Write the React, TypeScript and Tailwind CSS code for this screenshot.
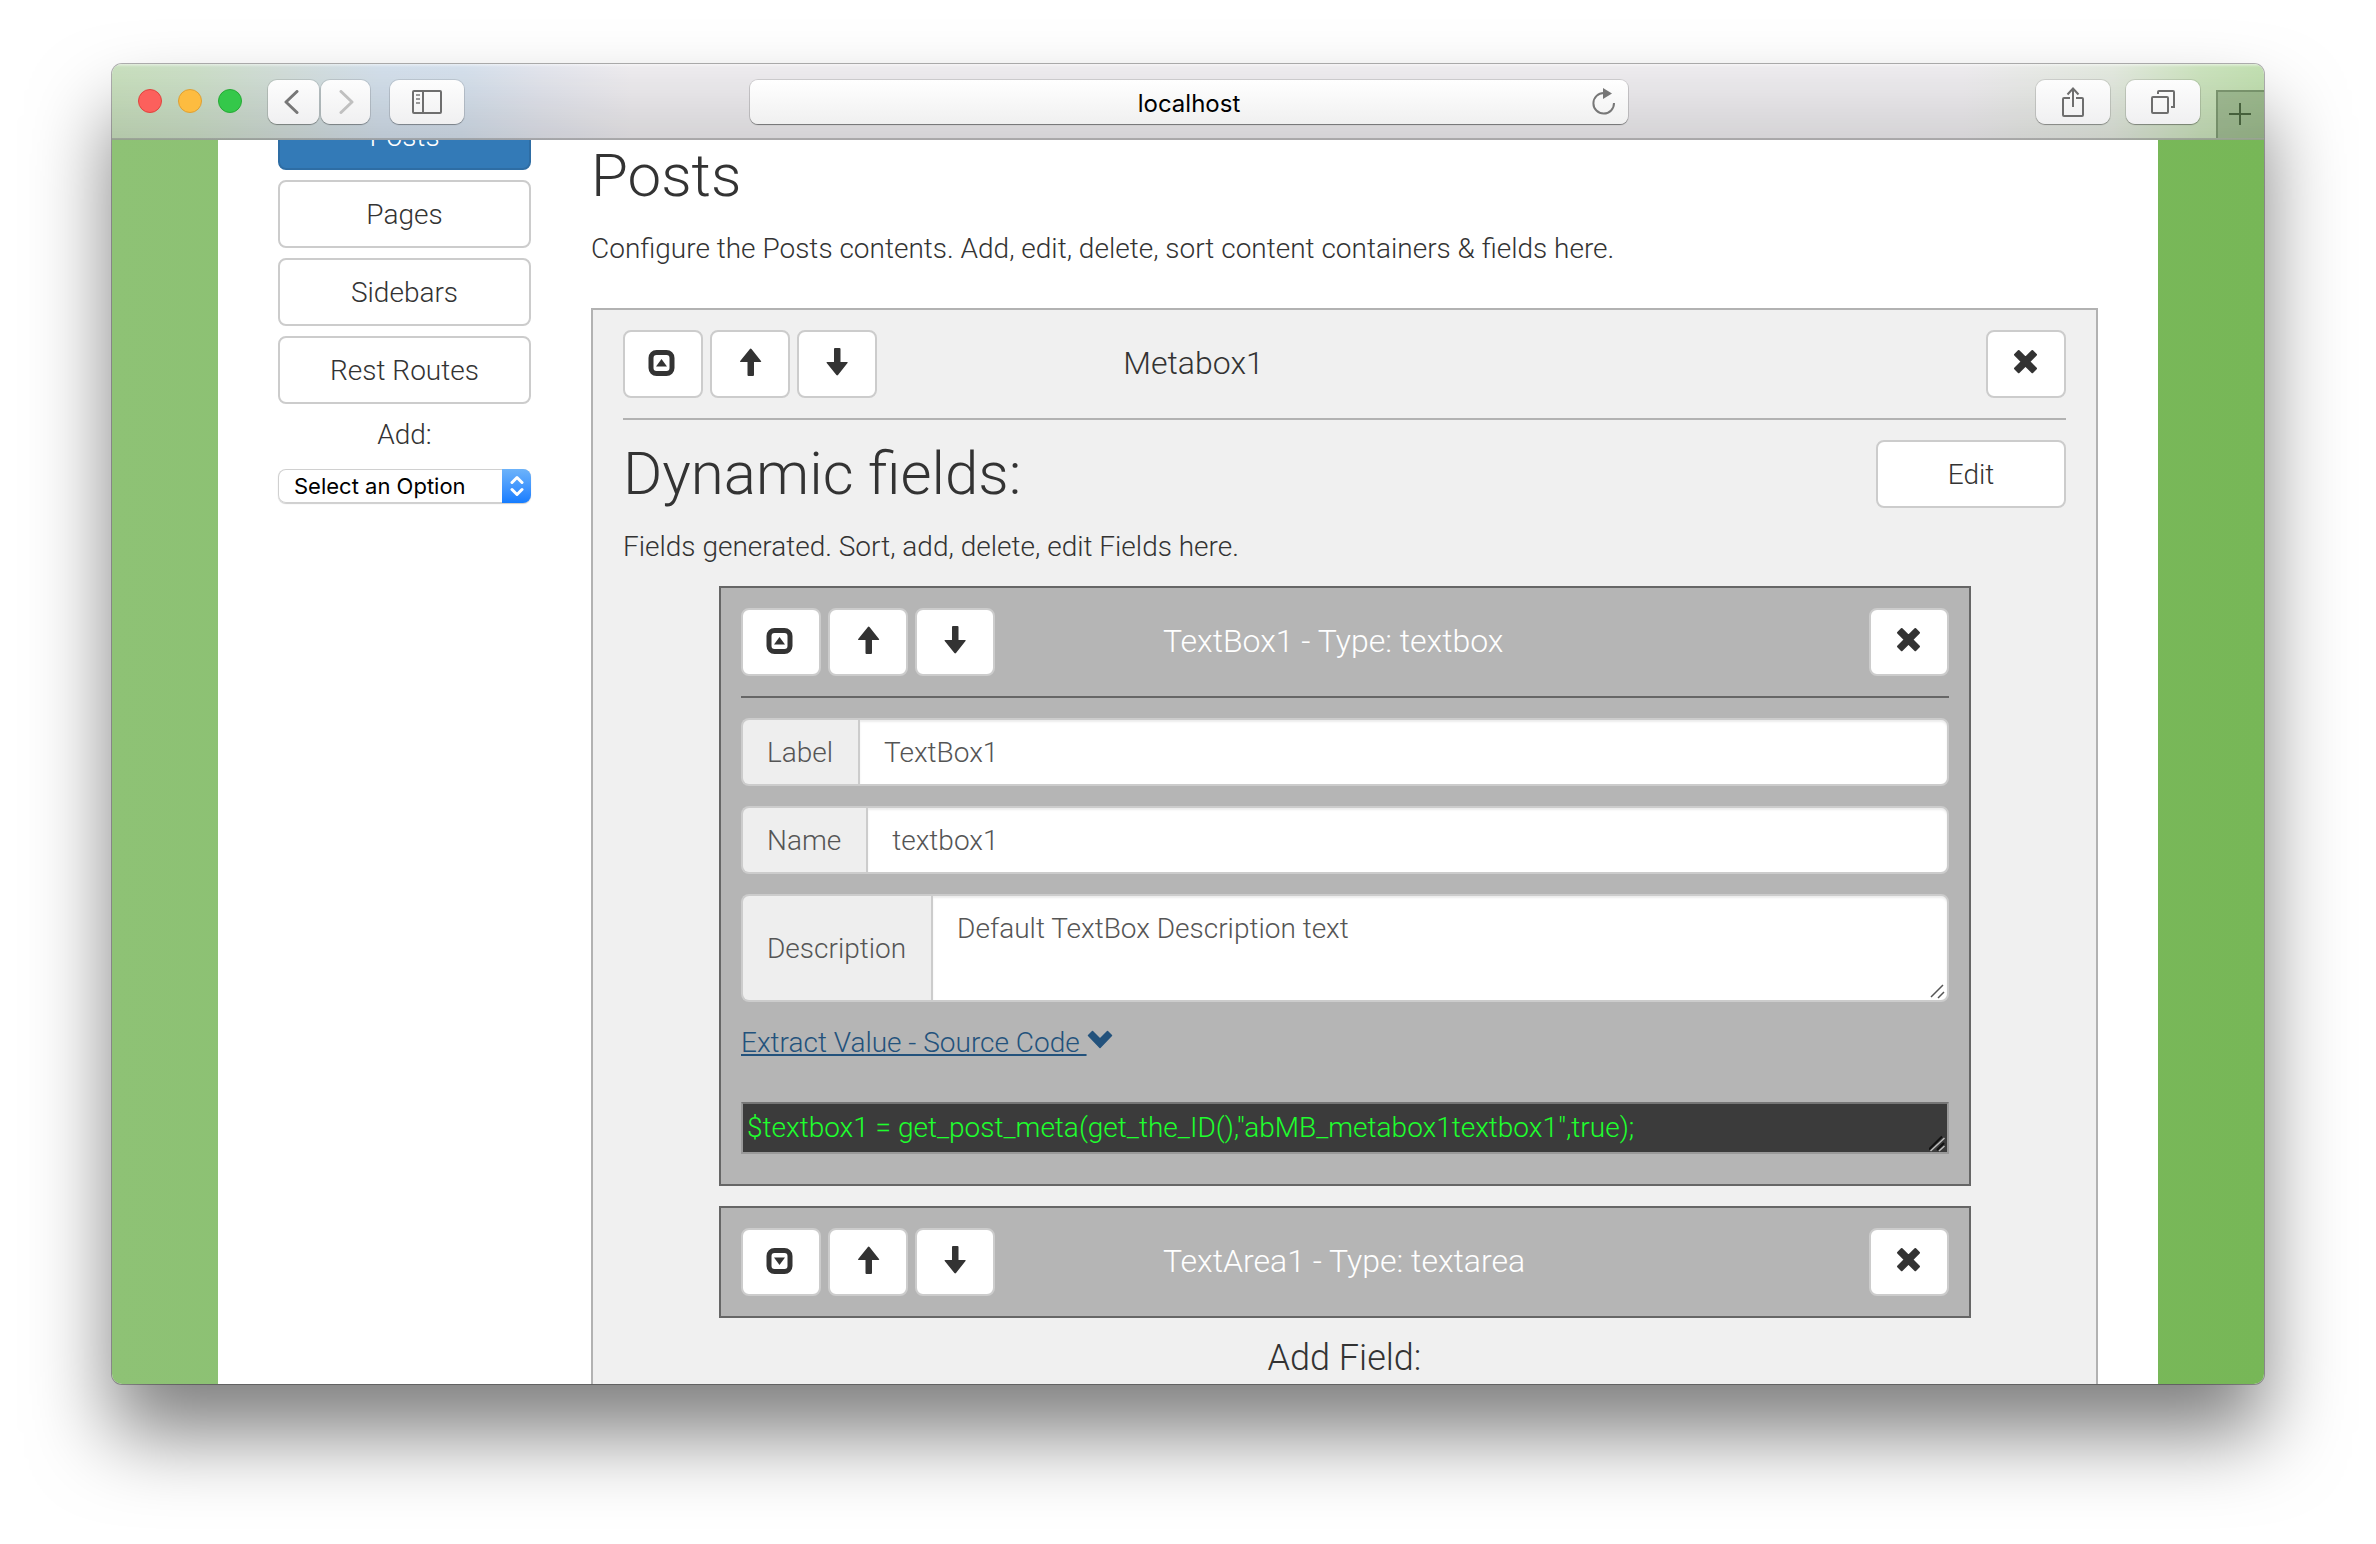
import React, { useState } from "react";

const iconButton =
  "flex h-[68px] items-center rounded-lg border-2 border-[#ccc] bg-white px-6 text-[#333]";
const toolButton =
  "flex h-11 items-center justify-center rounded-[9px] bg-linear-to-b from-[#fdfdfd] to-[#f0f0f1] shadow-[0_1px_1px_rgba(0,0,0,0.3),0_0_0_1px_rgba(0,0,0,0.1)]";

function ToggleIcon({ open }: { open: boolean }) {
  return (
    <svg width="28" height="28" viewBox="0 0 28 28" className="overflow-visible" aria-hidden="true">
      <rect x="2" y="2.5" width="21" height="21" rx="5.5" fill="none" stroke="currentColor" strokeWidth="5" />
      <path d={open ? "M12.5 9 18 16.5H7Z" : "M12.5 17 18 9.5H7Z"} fill="currentColor" />
    </svg>
  );
}

function ArrowIcon({ down }: { down?: boolean }) {
  return (
    <svg width="28" height="28" viewBox="0 0 28 28" className="overflow-visible" aria-hidden="true">
      <path
        d={
          down
            ? "M12 -2h4.500q1 0 1 1v13h6.500q1.300 0 .5 1L15 25q-.8 .9-1.600 0L3.700 13q-.7-1 .5-1H11V-1q0-1 1-1Z"
            : "M12.500 26h4.500q1 0 1-1V12h6.500q1.300 0 .5-1L15.500 -1q-.8-.9-1.600 0L4.200 11q-.7 1 .5 1H11.500v13q0 1 1 1Z"
        }
        fill="currentColor"
      />
    </svg>
  );
}

function CloseIcon() {
  return (
    <svg width="28" height="28" viewBox="0 0 28 28" className="overflow-visible" aria-hidden="true">
      <path
        d="M3 4.700 6.700 1 13.500 7.700 20.300 1 24 4.700 17.300 11.600 24 18.500 20.300 22.200 13.500 15.500 6.700 22.200 3 18.500 9.700 11.600Z"
        fill="currentColor"
        stroke="currentColor"
        strokeWidth="2"
        strokeLinejoin="round"
      />
    </svg>
  );
}

function ResizeGrip({ dark }: { dark?: boolean }) {
  return (
    <svg
      width="18"
      height="18"
      viewBox="0 0 18 18"
      className="pointer-events-none absolute right-[2px] bottom-[2px]"
      aria-hidden="true"
    >
      {dark && <path d="M0 15.500 13 2.500M8 16 15 9" stroke="#111" strokeWidth="2" />}
      <path
        d={dark ? "M1.500 17 15.500 4M10 17 15.500 12" : "M2 15 14 3M9 16 15 10"}
        stroke={dark ? "#bbb" : "#555"}
        strokeWidth="1.500"
      />
    </svg>
  );
}

function BoxHeader({ title, open, titleClass }: { title: string; open: boolean; titleClass: string }) {
  return (
    <div className="grid grid-cols-3 gap-x-[58px]">
      <div className="flex gap-[7px]">
        <button type="button" aria-label="Toggle" className={iconButton}>
          <ToggleIcon open={open} />
        </button>
        <button type="button" aria-label="Move up" className={iconButton}>
          <ArrowIcon />
        </button>
        <button type="button" aria-label="Move down" className={iconButton}>
          <ArrowIcon down />
        </button>
      </div>
      <h3 className={titleClass}>{title}</h3>
      <div className="flex justify-end">
        <button type="button" aria-label="Remove" className={iconButton}>
          <CloseIcon />
        </button>
      </div>
    </div>
  );
}

const addon =
  "flex items-center rounded-l-lg border-2 border-r-0 border-[#ccc] bg-[#eee] pt-[2px] pr-[25px] pl-6 text-[#555]";
const control =
  "block w-full rounded-r-lg border-2 border-[#ccc] bg-white px-6 text-[#555] shadow-[inset_0_2px_2px_rgba(0,0,0,0.075)] outline-none";

function TextField({ id, label, initial }: { id: string; label: string; initial: string }) {
  const [value, setValue] = useState(initial);
  return (
    <div className="flex">
      <label htmlFor={id} className={addon}>
        {label}
      </label>
      <input
        id={id}
        type="text"
        value={value}
        onChange={(e) => setValue(e.target.value)}
        className={control + " h-[68px] min-w-0 flex-1 py-3 leading-10"}
      />
    </div>
  );
}

function Toolbar() {
  return (
    <header className="grid h-[76px] shrink-0 grid-cols-[638fr_878fr_636fr] border-b-2 border-black/30 bg-[linear-gradient(to_bottom,rgba(255,255,255,0.5)_0,rgba(255,255,255,0)_3px,rgba(0,0,0,0.1)_100%),linear-gradient(to_right,#c8dfbd_0,#cbdec6_80px,#d1dcd8_170px,#d2deea_270px,#d4dfeb_350px,#e2e4ec_430px,#edebee_520px,#edebee_86%,#e2e8de_93%,#cbe2bd_97%,#c1dfb0_100%)]">
      <div className="flex items-start pt-4 pl-[26px]">
        <div className="flex gap-4 pt-[9px]">
          <button type="button" aria-label="Close window" className="size-6 rounded-full border border-[#e0443e] bg-[#fc605c]" />
          <button type="button" aria-label="Minimize window" className="size-6 rounded-full border border-[#dea034] bg-[#fdbc40]" />
          <button type="button" aria-label="Zoom window" className="size-6 rounded-full border border-[#27aa35] bg-[#34c84a]" />
        </div>
        <div className="ml-[26px] flex gap-[2px]">
          <button type="button" aria-label="Back" className={toolButton + " w-[51px] pr-1"}>
            <svg width="16" height="24" viewBox="0 0 16 24" fill="none" stroke="#777" strokeWidth="3" strokeLinecap="round" strokeLinejoin="round">
              <path d="M13 1.500 2 12l11 10.500" />
            </svg>
          </button>
          <button type="button" aria-label="Forward" className={toolButton + " w-[49px]"}>
            <svg width="16" height="24" viewBox="0 0 16 24" fill="none" stroke="#c0c0c0" strokeWidth="3" strokeLinecap="round" strokeLinejoin="round">
              <path d="M3 1.500 14 12 3 22.500" />
            </svg>
          </button>
        </div>
        <button type="button" aria-label="Show sidebar" className={toolButton + " ml-5 w-[74px]"}>
          <svg width="30" height="24" viewBox="0 0 30 24" fill="none" stroke="#6e6e6e" strokeWidth="2">
            <rect x="1" y="1" width="28" height="22" rx="1" />
            <path d="M11 1v22" />
            <path d="M4 5h4M4 9h4M4 13h4" stroke="#999" />
          </svg>
        </button>
      </div>
      <div className="pt-4">
        <div className="relative h-11 rounded-lg bg-linear-to-b from-white to-[#f0f0f0] shadow-[0_1px_1px_rgba(0,0,0,0.4),0_0_0_1px_rgba(0,0,0,0.12)]">
          <input
            type="text"
            aria-label="Address"
            defaultValue="localhost"
            className="h-full w-full bg-transparent px-16 pt-[2px] text-center font-['Inter',sans-serif] text-2xl text-black outline-none"
          />
          <button type="button" aria-label="Reload" className="absolute top-2 right-3">
            <svg width="24" height="28" viewBox="0 0 24 28">
              <path d="M12 5A10.300 10.300 0 1 0 22 15" fill="none" stroke="#777" strokeWidth="2" />
              <path d="M11 0 20 5.500 11 11Z" fill="#777" />
            </svg>
          </button>
        </div>
      </div>
      <div className="flex items-start justify-end gap-4 pt-4">
        <button type="button" aria-label="Share" className={toolButton + " w-[74px]"}>
          <svg width="24" height="32" viewBox="0 0 24 32" fill="none" stroke="#6e6e6e" strokeWidth="2">
            <path d="M9 12H3q-1 0-1 1v16q0 1 1 1h18q1 0 1-1V13q0-1-1-1h-6" />
            <path d="M12 21V3M6.500 8.500 12 2.500l5.500 6" />
          </svg>
        </button>
        <button type="button" aria-label="Show all tabs" className={toolButton + " w-[74px]"}>
          <svg width="26" height="26" viewBox="0 0 26 26" fill="none" stroke="#6e6e6e" strokeWidth="2">
            <rect x="2" y="8" width="16" height="16" rx="1" />
            <path d="M8 5V3q0-1 1-1h14q1 0 1 1v15h-3" />
          </svg>
        </button>
        <button
          type="button"
          aria-label="New tab"
          className="mt-[10px] flex h-12 w-12 items-center justify-center border-t-2 border-l-2 border-[#465f3c]/40 bg-[#47653a]/30 pr-[2px] pb-[2px]"
        >
          <svg width="22" height="22" viewBox="0 0 22 22" stroke="#46603c" strokeWidth="2">
            <path d="M11 0v22M0 11h22" />
          </svg>
        </button>
      </div>
    </header>
  );
}

function Sidebar() {
  const item = "block h-[68px] w-full rounded-lg border-2 pt-[2px] text-center leading-10";
  return (
    <nav className="-mt-[38px] flex w-[253px] shrink-0 flex-col gap-[10px]">
      <button type="button" className={item + " border-[#2e6da4] bg-[#337ab7] text-white"}>
        Posts
      </button>
      {["Pages", "Sidebars", "Rest Routes"].map((name) => (
        <button key={name} type="button" className={item + " border-[#ccc] bg-white text-[#333]"}>
          {name}
        </button>
      ))}
      <label htmlFor="add-option" className="text-center leading-[42px]">
        Add:
      </label>
      <div className="relative mt-[3px] h-[34px]">
        <select
          id="add-option"
          className="block h-full w-full appearance-none rounded-lg bg-white pl-4 font-['Inter',sans-serif] text-[22px] font-normal text-black shadow-[inset_0_0_0_1px_#d0d0d0,0_1px_1px_rgba(0,0,0,0.2)] outline-none"
        >
          <option>Select an Option</option>
        </select>
        <span className="pointer-events-none absolute inset-y-0 right-0 flex w-[29px] items-center justify-center rounded-r-lg bg-linear-to-b from-[#6cb3fa] to-[#147cff]">
          <svg width="14" height="22" viewBox="0 0 14 22" fill="none" stroke="#fff" strokeWidth="3" strokeLinecap="round" strokeLinejoin="round">
            <path d="M2 7.500 7 2.500l5 5M2 14.500l5 5 5-5" />
          </svg>
        </span>
      </div>
    </nav>
  );
}

const fieldBox = "mr-[95px] ml-24 border-2 border-[#666] bg-[#b5b5b5] p-5";
const boxTitle = "pt-[15px] text-[32px] leading-9 whitespace-nowrap";

function Main() {
  const [description, setDescription] = useState("Default TextBox Description text");
  return (
    <main className="min-w-0 flex-1 pt-[2px]">
      <h2 className="text-6xl leading-[68px]">Posts</h2>
      <p className="mt-[18px] leading-[42px]">
        Configure the Posts contents. Add, edit, delete, sort content containers &amp; fields here.
      </p>
      <section className="mt-[38px] border-2 border-[#b2b2b2] bg-[#f0f0f0] px-[30px] pt-5 pb-20">
        <BoxHeader title="Metabox1" open titleClass={boxTitle} />
        <hr className="my-5 border-t-2 border-[#b2b2b2]" />
        <div className="flex justify-between">
          <h2 className="text-6xl leading-[68px]">Dynamic fields:</h2>
          <button type="button" className="h-[68px] w-[190px] rounded-lg border-2 border-[#ccc] bg-white pt-[2px] leading-10">
            Edit
          </button>
        </div>
        <p className="mt-[18px] leading-[42px]">Fields generated. Sort, add, delete, edit Fields here.</p>

        <section className={fieldBox + " mt-[18px] pb-[30px]"}>
          <BoxHeader title="TextBox1 - Type: textbox" open titleClass={boxTitle + " text-white"} />
          <hr className="my-5 border-t-2 border-[#666]" />
          <div className="flex flex-col gap-5">
            <TextField id="field-label" label="Label" initial="TextBox1" />
            <TextField id="field-name" label="Name" initial="textbox1" />
            <div className="flex">
              <label htmlFor="field-description" className={addon}>
                Description
              </label>
              <div className="relative min-w-0 flex-1">
                <textarea
                  id="field-description"
                  value={description}
                  onChange={(e) => setDescription(e.target.value)}
                  className={control + " h-[108px] resize-none py-3 leading-[42px]"}
                />
                <ResizeGrip />
              </div>
            </div>
          </div>
          <div className="mt-5 flex leading-[42px]">
            <a href="#source" className="flex text-[#23527c]">
              <span className="whitespace-pre underline decoration-2 underline-offset-2">{"Extract Value - Source Code "}</span>
              <svg width="26" height="20" viewBox="0 0 26 20" className="mt-2 shrink-0" aria-hidden="true">
                <path
                  d="M1.500 5.500 5.500 1.500 13 9 20.500 1.500 24.500 5.500 13 17.500Z"
                  fill="currentColor"
                  stroke="currentColor"
                  strokeWidth="1.500"
                  strokeLinejoin="round"
                />
              </svg>
            </a>
          </div>
          <div className="relative mt-[38px]">
            <textarea
              readOnly
              aria-label="Source code"
              value={'$textbox1 = get_post_meta(get_the_ID(),"abMB_metabox1textbox1",true);'}
              className="block h-[52px] w-full resize-none overflow-hidden border-2 border-[#999] border-t-[#767676] bg-[#3b3b3b] px-1 py-[3px] leading-[42px] text-[#1fff2e] outline-none"
            />
            <ResizeGrip dark />
          </div>
        </section>

        <section className={fieldBox + " mt-5"}>
          <BoxHeader title="TextArea1 - Type: textarea" open={false} titleClass={boxTitle + " text-white"} />
        </section>
        <h4 className="mt-5 text-center text-4xl leading-10">Add Field:</h4>
      </section>
    </main>
  );
}

export default function App() {
  return (
    <div className="flex h-screen flex-col overflow-hidden bg-white px-28 pt-16 pb-40">
      <div className="flex min-h-0 flex-1 flex-col rounded-[10px] shadow-[0_50px_80px_rgba(0,0,0,0.5),0_0_0_1px_rgba(0,0,0,0.3)]">
        <div className="flex min-h-0 flex-1 flex-col overflow-hidden rounded-[10px]">
          <Toolbar />
          <div className="min-h-0 flex-1 overflow-hidden bg-linear-to-r from-[#8ec275] to-[#77b757] px-[106px]">
            <div className="flex gap-[60px] bg-white px-[60px] font-['Roboto',sans-serif] text-[28px] font-light text-[#333]">
              <Sidebar />
              <Main />
            </div>
          </div>
        </div>
      </div>
    </div>
  );
}
